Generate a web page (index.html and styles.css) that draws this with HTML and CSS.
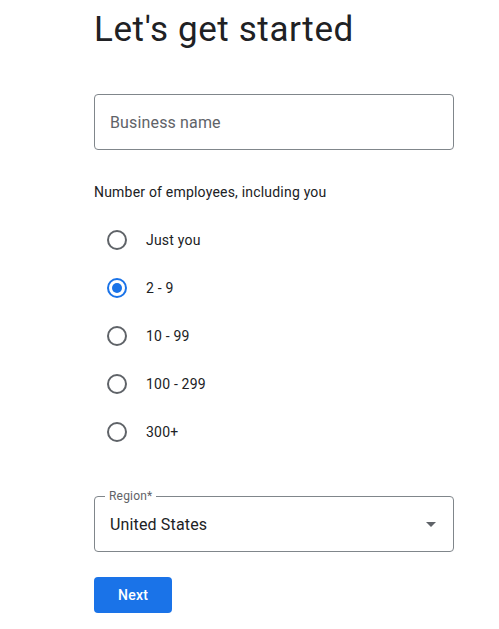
FILE: index.html
```html
<!DOCTYPE html>
<html lang="en">
<head>
<meta charset="utf-8">
<title>Let's get started</title>
<link rel="stylesheet" href="styles.css">
</head>
<body>
<main class="page">
  <h1 class="title">Let's get started</h1>
  <input class="text-field" type="text" placeholder="Business name">
  <div class="group-label">Number of employees, including you</div>
  <div class="radio-group">
    <label class="radio-row"><input class="radio" type="radio" name="emp"><span>Just you</span></label>
    <label class="radio-row"><input class="radio" type="radio" name="emp" checked><span>2 - 9</span></label>
    <label class="radio-row"><input class="radio" type="radio" name="emp"><span>10 - 99</span></label>
    <label class="radio-row"><input class="radio" type="radio" name="emp"><span>100 - 299</span></label>
    <label class="radio-row"><input class="radio" type="radio" name="emp"><span>300+</span></label>
  </div>
  <fieldset class="select-field">
    <legend class="select-legend">Region*</legend>
    <div class="select-value">
      <span>United States</span>
      <span class="arrow"></span>
    </div>
  </fieldset>
  <button class="next-btn" type="button">Next</button>
</main>
</body>
</html>
```
FILE: styles.css
```css
* { box-sizing: border-box; }
html, body { margin: 0; background: #fff; }
body {
  font-family: Roboto, "Liberation Sans", Arial, sans-serif;
  color: #202124;
}
.page {
  width: 360px;
  margin-left: 94px;
  padding-top: 8px;
  display: flex;
  flex-direction: column;
  align-items: flex-start;
}
.title {
  margin: 0;
  font-size: 35px;
  line-height: 44px;
  font-weight: 400;
  color: #202124;
  letter-spacing: 0.6px;
}
.text-field {
  margin-top: 42px;
  width: 360px;
  height: 56px;
  border: 1px solid #80868b;
  border-radius: 4px;
  padding: 0 15px;
  font-family: inherit;
  font-size: 16px;
  letter-spacing: 0.15px;
  color: #202124;
  outline: none;
}
.text-field::placeholder { color: #5f6368; }
.group-label {
  margin-top: 32px;
  font-size: 14px;
  line-height: 20px;
  letter-spacing: 0.2px;
  color: #202124;
}
.radio-group {
  margin-top: 14px;
  display: flex;
  flex-direction: column;
}
.radio-row {
  height: 48px;
  display: flex;
  align-items: center;
  gap: 19px;
  padding-left: 13px;
  font-size: 14px;
  letter-spacing: 0.2px;
  color: #202124;
}
.radio {
  appearance: none;
  -webkit-appearance: none;
  margin: 0;
  width: 20px;
  height: 20px;
  border: 2px solid #5f6368;
  border-radius: 50%;
  display: grid;
  place-items: center;
}
.radio:checked { border-color: #1a73e8; }
.radio:checked::after {
  content: "";
  width: 10px;
  height: 10px;
  border-radius: 50%;
  background: #1a73e8;
}
.select-field {
  margin: 32px 0 0;
  width: 360px;
  border: 1px solid #80868b;
  border-radius: 4px;
  padding: 0 17px 7px 15px;
  min-width: 0;
}
.select-legend {
  margin-left: -5px;
  padding: 0 4px;
  font-size: 12px;
  line-height: 16px;
  letter-spacing: 0.2px;
  color: #5f6368;
}
.select-value {
  height: 40px;
  display: flex;
  align-items: center;
  justify-content: space-between;
  font-size: 16px;
  letter-spacing: 0.15px;
  color: #202124;
}
.arrow {
  width: 0;
  height: 0;
  border-left: 5px solid transparent;
  border-right: 5px solid transparent;
  border-top: 5px solid #5f6368;
}
.next-btn {
  margin-top: 25px;
  height: 36px;
  padding: 0 24px;
  border: none;
  border-radius: 4px;
  background: #1a73e8;
  color: #fff;
  font-family: inherit;
  font-size: 14px;
  font-weight: 500;
  letter-spacing: 0.25px;
}
```
